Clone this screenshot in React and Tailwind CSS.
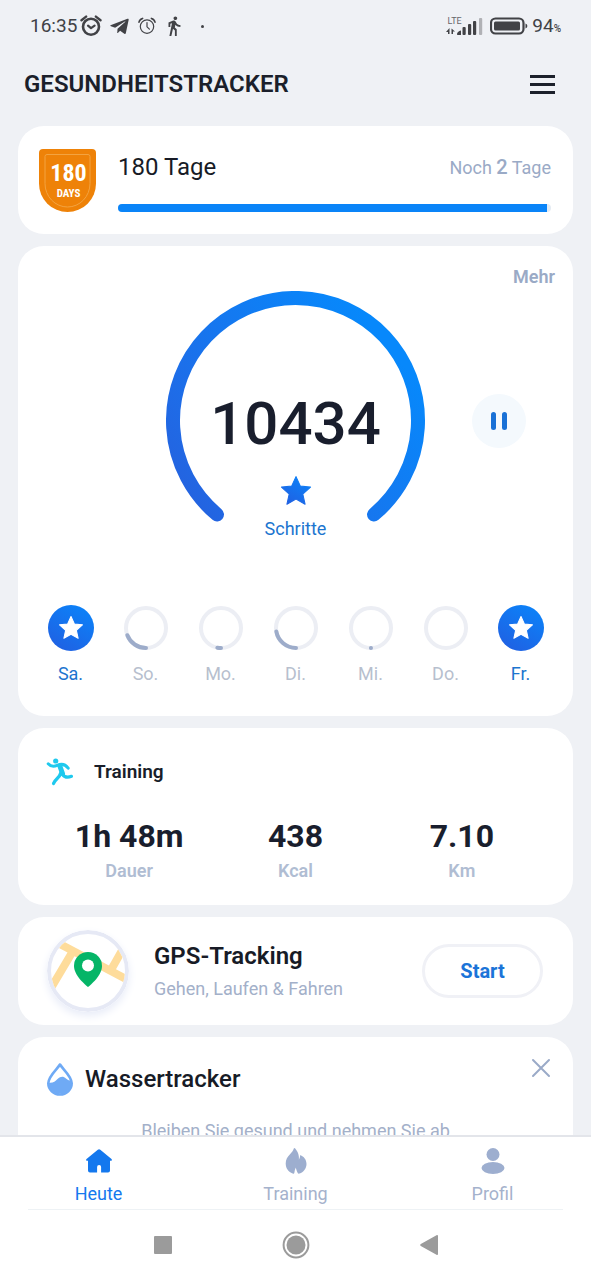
import React from "react";
import { MdDirectionsWalk } from "react-icons/md";
import { FaTelegramPlane } from "react-icons/fa";

const STAR =
  "M12 1.2l3.2 7.1 7.7.8-5.8 5.2 1.7 7.6-6.8-3.9-6.8 3.9 1.7-7.6L1.1 9.1l7.7-.8z";

const days = [
  { label: "Sa.", done: true },
  { label: "So.", progress: 0.19 },
  { label: "Mo.", progress: 0.03 },
  { label: "Di.", progress: 0.22 },
  { label: "Mi.", progress: 0.001 },
  { label: "Do.", progress: 0 },
  { label: "Fr.", done: true },
];

const stats = [
  { value: "1h 48m", label: "Dauer" },
  { value: "438", label: "Kcal" },
  { value: "7.10", label: "Km" },
];

function BoldAlarm() {
  return (
    <svg viewBox="0 0 22 22" className="size-[22px]" fill="none" stroke="currentColor" aria-hidden="true">
      <circle cx="11" cy="11.7" r="8" strokeWidth="2.6" />
      <path d="M1.5 5.2l4.6-3.6M20.5 5.2l-4.6-3.6" strokeWidth="2.4" strokeLinecap="round" />
      <path d="M8 10.6l3 2.6 3.6-2.6" strokeWidth="2.2" strokeLinecap="round" strokeLinejoin="round" />
    </svg>
  );
}

function ThinAlarm() {
  return (
    <svg viewBox="0 0 18 18" className="size-[18px]" fill="none" stroke="currentColor" aria-hidden="true">
      <circle cx="9" cy="9.6" r="6.7" strokeWidth="1.2" />
      <path d="M1 5.2A5 5 0 0 1 4.6 1.4M17 5.2a5 5 0 0 0-3.6-3.8" strokeWidth="1.6" strokeLinecap="round" />
      <path d="M9 5.5v4.3l2.4 2.4" strokeWidth="1.2" strokeLinecap="round" />
    </svg>
  );
}

function StatusBar() {
  return (
    <div className="flex h-[52px] shrink-0 items-center justify-between px-[30px] text-[#414246]">
      <div className="flex items-center">
        <span className="text-[19px] leading-6">16:35</span>
        <span className="ml-[3px]"><BoldAlarm /></span>
        <FaTelegramPlane className="ml-[7px] size-[21px]" aria-hidden="true" />
        <span className="ml-2"><ThinAlarm /></span>
        <MdDirectionsWalk className="ml-[7px] size-[22px]" aria-hidden="true" />
        <span className="ml-4 size-[3px] rounded-full bg-current" />
      </div>
      <div className="flex items-center">
        <svg viewBox="0 0 37 20" className="h-5 w-[37px]" aria-hidden="true">
          <text x="1.500" y="7.500" fontSize="9" fontFamily="Roboto, sans-serif" fill="#66676b">LTE</text>
          <g fill="currentColor">
            <path d="M3.500 12v6H2v-2H0zM5.500 12.500L9 15.500H7v2.500H5.500z" />
            <path d="M11 18.500c0-2 1.500-3.500 4-4v4.500h-3.500z" />
            <rect x="16.500" y="11" width="3.200" height="8" rx="1" />
            <rect x="22" y="8" width="3.200" height="11" rx="1" />
            <rect x="27" y="5" width="3.200" height="14" rx="1" />
            <rect x="33" y="2" width="3.200" height="17" rx="1" fill="#b0b1b5" />
          </g>
        </svg>
        <svg viewBox="0 0 38 18" className="ml-[7px] h-[18px] w-[38px]" aria-hidden="true">
          <rect x="1" y="1.500" width="32.500" height="15" rx="4.500" fill="none" stroke="currentColor" strokeWidth="2.200" />
          <rect x="4" y="4.500" width="26" height="9" rx="1.500" fill="currentColor" />
          <path d="M35.500 6.500a2.600 2.600 0 0 1 0 5z" fill="currentColor" />
        </svg>
        <span className="ml-1 flex items-baseline text-[19px] leading-6">
          94<span className="text-[10px] leading-none font-medium">%</span>
        </span>
      </div>
    </div>
  );
}

function Badge() {
  return (
    <svg viewBox="0 0 57 63" className="h-[63px] w-[57px] shrink-0" aria-hidden="true">
      <path d="M4 0h49a4 4 0 0 1 4 4v30.500a28.500 28.500 0 0 1-57 0V4a4 4 0 0 1 4-4z" fill="#ee8208" />
      <path d="M8 5.500h41a2 2 0 0 1 2 2v27a22.500 23.500 0 0 1-45 0v-27a2 2 0 0 1 2-2z" fill="none" stroke="#f3a340" strokeWidth="1" />
      <g fill="#fff" fontFamily="'Roboto Condensed', 'Liberation Sans Narrow', Roboto, sans-serif" fontWeight="700" textAnchor="middle">
        <text x="29.500" y="32" fontSize="24">180</text>
        <text x="29.500" y="48" fontSize="11">DAYS</text>
      </g>
    </svg>
  );
}

function StreakCard() {
  return (
    <section className="flex h-[108px] shrink-0 items-center gap-[22px] rounded-[26px] bg-white pr-[22px] pl-[21px]">
      <Badge />
      <div className="flex flex-1 flex-col gap-[22px] pt-1">
        <div className="flex items-center justify-between">
          <h2 className="text-2xl leading-7 text-[#171b26]">180 Tage</h2>
          <p className="text-lg leading-7 text-[#9aaac6]">
            Noch <span className="text-xl font-medium">2</span> Tage
          </p>
        </div>
        <div className="h-2 overflow-hidden rounded-full bg-[#e4ebf3]" role="progressbar" aria-label="180 Tage" aria-valuenow={178} aria-valuemin={0} aria-valuemax={180}>
          <div className="h-full w-[99%] bg-[#0a84f8]" />
        </div>
      </div>
    </section>
  );
}

function DayMark({ day }) {
  const length = 2 * Math.PI * 20;
  return (
    <svg viewBox="0 0 46 46" className="size-[46px]" aria-hidden="true">
      {day.done ? (
        <>
          <circle cx="23" cy="23" r="23" fill="url(#blue)" />
          <path d={STAR} transform="translate(10.400 10.300) scale(1.050)" fill="#fff" stroke="#fff" strokeLinejoin="round" />
        </>
      ) : (
        <>
          <circle cx="23" cy="23" r="20" fill="none" stroke="#eceef4" strokeWidth="4" />
          {day.progress > 0 && (
            <circle
              cx="23"
              cy="23"
              r="20"
              fill="none"
              stroke="#9dacca"
              strokeWidth="4"
              strokeLinecap="round"
              strokeDasharray={`${length * day.progress} ${length}`}
              transform="rotate(90 23 23)"
            />
          )}
        </>
      )}
    </svg>
  );
}

function StepsCard() {
  return (
    <section className="flex shrink-0 flex-col rounded-[26px] bg-white pb-7">
      <div className="flex justify-end pt-[17px] pr-[18px] pb-px">
        <a href="#mehr" className="text-lg leading-[27px] font-semibold text-[#9aaac6]">Mehr</a>
      </div>
      <div className="grid grid-cols-[1fr_260px_1fr] items-center">
        <div className="relative col-start-2 h-[260px]">
          <svg viewBox="0 0 260 260" className="size-[260px]" aria-hidden="true">
            <defs>
              <linearGradient id="ring" x1="0" y1="0.900" x2="0.900" y2="0.250">
                <stop offset="0" stopColor="#2462df" />
                <stop offset="0.300" stopColor="#1d6ee9" />
                <stop offset="1" stopColor="#0788fb" />
              </linearGradient>
              <linearGradient id="blue" x1="0.200" y1="1" x2="0.800" y2="0">
                <stop offset="0" stopColor="#2060e2" />
                <stop offset="1" stopColor="#0b83f9" />
              </linearGradient>
            </defs>
            <path d="M51 223.500a122.500 122.500 0 1 1 157 0" fill="none" stroke="url(#ring)" strokeWidth="14" strokeLinecap="round" />
          </svg>
          <div className="absolute inset-x-0 top-[98px] flex flex-col items-center">
            <p className="text-[60px] leading-[70px] font-medium text-[#191e2d]">10434</p>
            <svg viewBox="0 0 24 24" className="mt-4 size-8" aria-hidden="true">
              <path d={STAR} fill="url(#blue)" stroke="url(#blue)" strokeWidth="0.800" strokeLinejoin="round" />
            </svg>
            <p className="mt-2 text-lg leading-7 text-[#1c75cf]">Schritte</p>
          </div>
        </div>
        <button type="button" aria-label="Pause" className="flex size-[54px] items-center justify-center gap-[6px] justify-self-center rounded-full bg-[#f4f9fd]">
          <span className="h-[18px] w-[5px] rounded-full bg-[#1971d6]" />
          <span className="h-[18px] w-[5px] rounded-full bg-[#1971d6]" />
        </button>
      </div>
      <ol className="mt-[54px] grid grid-cols-7 px-[15px]">
        {days.map((day) => (
          <li key={day.label} className="flex flex-col items-center gap-[9px]">
            <DayMark day={day} />
            <span className={day.done ? "text-lg leading-7 text-[#1c75cf]" : "text-lg leading-7 text-[#b7bfce]"}>
              {day.label}
            </span>
          </li>
        ))}
      </ol>
    </section>
  );
}

function Runner() {
  return (
    <svg viewBox="0 0 28 28" className="size-7" fill="none" stroke="#1fc9ee" strokeLinecap="round" strokeLinejoin="round" aria-hidden="true">
      <circle cx="9.700" cy="3" r="2.600" fill="#1fc9ee" stroke="none" />
      <path d="M2.200 5.800c2.500 2.800 6 3 9 1.600 4-1.800 8-1.200 11 2.800" strokeWidth="3" />
      <path d="M14 8.500l2.500 7" strokeWidth="5" />
      <path d="M16.500 16.500c2.200 3 5.500 3.300 9 1.800" strokeWidth="3.200" />
      <path d="M14.500 15.500c-.6 2.400-1.800 3.600-3.300 5-1.700 1.600-2.700 3-3.700 5" strokeWidth="3.200" />
    </svg>
  );
}

function TrainingCard() {
  return (
    <section className="shrink-0 rounded-[26px] bg-white px-7 pt-7 pb-5">
      <div className="flex items-center gap-5">
        <Runner />
        <h2 className="text-[19px] leading-8 font-semibold text-[#191e2a]">Training</h2>
      </div>
      <dl className="mt-7 grid grid-cols-3">
        {stats.map((s) => (
          <div key={s.label} className="flex flex-col-reverse items-center">
            <dt className="text-lg leading-[29px] font-semibold text-[#b0bdd3]">{s.label}</dt>
            <dd className="text-[32px] leading-10 font-bold text-[#191e2d]">{s.value}</dd>
          </div>
        ))}
      </dl>
    </section>
  );
}

function MapPin() {
  return (
    <svg viewBox="0 0 82 82" className="size-[82px] shrink-0 rounded-full shadow-[0_4px_8px_#e8ecf8]" aria-hidden="true">
      <defs>
        <clipPath id="map"><circle cx="41" cy="41" r="37" /></clipPath>
      </defs>
      <circle cx="41" cy="41" r="39" fill="#fff" stroke="#e6e9f5" strokeWidth="4" />
      <g clipPath="url(#map)" stroke="#fedc9b" strokeWidth="8" fill="none">
        <path d="M12 13.500l68 36" />
        <path d="M26 21L4 58" />
        <path d="M77 17L64 40" />
      </g>
      <path d="M41 57S27 46.500 27 36a14 14 0 0 1 28 0C55 46.500 41 57 41 57z" fill="#05b567" />
      <circle cx="41" cy="35.500" r="6" fill="#fff" />
    </svg>
  );
}

function GpsCard() {
  return (
    <section className="flex h-[108px] shrink-0 items-center rounded-[26px] bg-white pr-[30px] pl-[29px]">
      <MapPin />
      <div className="ml-[25px] flex-1">
        <h2 className="text-2xl leading-9 font-semibold text-[#171b26]">GPS-Tracking</h2>
        <p className="text-lg leading-[30px] text-[#a3b0c9]">Gehen, Laufen &amp; Fahren</p>
      </div>
      <button type="button" className="h-[54px] w-[121px] rounded-full border-[3px] border-[#f0f1f6] text-xl font-bold text-[#1b74d8]">
        Start
      </button>
    </section>
  );
}

function WaterCard() {
  return (
    <section className="shrink-0 rounded-[26px] bg-white px-7 pt-5 pb-8">
      <div className="flex items-start justify-between">
        <div className="flex items-center gap-[11px] pt-1">
          <svg viewBox="0 0 28 34" className="h-[34px] w-7" aria-hidden="true">
            <path d="M14 2.500C11.500 7 2.300 14 2.300 21.300a11.700 11.200 0 0 0 23.400 0C25.700 14 16.500 7 14 2.500z" fill="#fff" stroke="#6faaf5" strokeWidth="2.600" strokeLinejoin="round" />
            <path d="M2 20.500c5 .8 7-1 9.500-3.500C15 13.800 17.500 14.300 20 16.500c1.800 1.600 3.500 2.200 5.800 2.200A11.900 11.900 0 1 1 2 20.500z" fill="#6faaf5" />
          </svg>
          <h2 className="text-2xl leading-9 font-medium text-[#171b26]">Wassertracker</h2>
        </div>
        <button type="button" aria-label="Schließen" className="-mt-[3px] -mr-[10px] p-1">
          <svg viewBox="0 0 20 20" className="size-5" fill="none" stroke="#9aaac8" strokeWidth="2" strokeLinecap="round" aria-hidden="true">
            <path d="M2 2l16 16M18 2L2 18" />
          </svg>
        </button>
      </div>
      <p className="mt-5 text-center text-lg leading-7 text-[#a3b0c9]">Bleiben Sie gesund und nehmen Sie ab</p>
    </section>
  );
}

function BottomNav() {
  return (
    <nav className="shrink-0 border-t-2 border-[#e3e5ea] bg-white">
      <ul className="grid grid-cols-3 text-lg leading-7 text-[#a5b2cc]">
        <li>
          <a href="#heute" aria-current="page" className="flex flex-col items-center gap-[5px] pt-[10px] text-[#1478ee]">
            <svg viewBox="0 0 28 28" className="size-7" fill="currentColor" aria-hidden="true">
              <path d="M12.800 2.700a2 2 0 0 1 2.500 0l11.200 9.200c.9.900.3 1.800-.7 1.800H25v9.800a2 2 0 0 1-2 2h-6.900V20a2 2 0 0 0-4 0v5.500H5a2 2 0 0 1-2-2v-9.800h-.8c-1 0-1.600-.9-.7-1.800z" />
            </svg>
            Heute
          </a>
        </li>
        <li>
          <a href="#training" className="flex flex-col items-center gap-[5px] pt-[10px]">
            <svg viewBox="0 0 28 28" className="size-7" fill="#9daecf" aria-hidden="true">
              <path d="M12.500 1c.2 0 .5.200.7.600 1.800 2.200 3.300 4.600 3.600 7.700.1 1.200.2 2.300.1 3.500.8-1.600 1.100-3.100 1.400-4.800 3.500 1.500 6.200 4.500 6.200 9 0 4.600-3.200 8.500-6.900 9.600-1 .3-1.700-.1-2-.9-.8-1.800-1.600-3.400-1.700-5.200-.8 1.500-1.300 3.200-1.500 4.900-.1 1-.8 1.500-1.800 1.100C6.600 25 3.700 21.300 3.700 16.500c0-4 1.800-6.700 4.300-9.300C9.800 5.300 11.300 3.800 11.800 1.500c.1-.3.400-.5.700-.5z" />
            </svg>
            Training
          </a>
        </li>
        <li>
          <a href="#profil" className="flex flex-col items-center gap-[5px] pt-[10px]">
            <svg viewBox="0 0 28 28" className="size-7" fill="#9daecf" aria-hidden="true">
              <circle cx="14" cy="7.500" r="6.500" />
              <ellipse cx="14" cy="21" rx="11.500" ry="6" />
            </svg>
            Profil
          </a>
        </li>
      </ul>
      <div className="mx-7 mt-px flex h-[71px] items-center justify-center gap-[105px] border-t border-[#eef2f5] text-[#9b9b9b]">
        <button type="button" aria-label="Übersicht" className="flex w-7 justify-center">
          <span className="size-[18px] rounded-[1px] bg-current" />
        </button>
        <button type="button" aria-label="Startbildschirm" className="flex w-7 justify-center">
          <svg viewBox="0 0 28 28" className="size-7" aria-hidden="true">
            <circle cx="14" cy="14" r="12.400" fill="none" stroke="currentColor" strokeWidth="2" />
            <circle cx="14" cy="14" r="9.500" fill="currentColor" />
          </svg>
        </button>
        <button type="button" aria-label="Zurück" className="flex w-7 justify-center">
          <svg viewBox="0 0 20 22" className="h-[22px] w-5" fill="currentColor" aria-hidden="true">
            <path d="M17.500 1.300c.8-.5 1.500-.2 1.500.8v17.800c0 1-.7 1.300-1.500.8L1.800 12c-.8-.6-.8-1.400 0-2z" />
          </svg>
        </button>
      </div>
    </nav>
  );
}

export default function App() {
  return (
    <div className="flex h-screen flex-col bg-[#eff1f5] font-[Roboto,sans-serif]">
      <StatusBar />
      <header className="flex h-16 shrink-0 items-center justify-between pr-9 pl-6">
        <h1 className="text-2xl leading-8 font-semibold text-[#1b1f2b]">GESUNDHEITSTRACKER</h1>
        <button type="button" aria-label="Menü" className="flex w-[25px] flex-col gap-[5px]">
          <span className="h-[3px] bg-[#1c202b]" />
          <span className="h-[3px] bg-[#1c202b]" />
          <span className="h-[3px] bg-[#1c202b]" />
        </button>
      </header>
      <main className="flex min-h-0 flex-1 flex-col gap-3 overflow-y-auto px-[18px] pt-[10px] [scrollbar-width:none]">
        <StreakCard />
        <StepsCard />
        <TrainingCard />
        <GpsCard />
        <WaterCard />
      </main>
      <BottomNav />
    </div>
  );
}
